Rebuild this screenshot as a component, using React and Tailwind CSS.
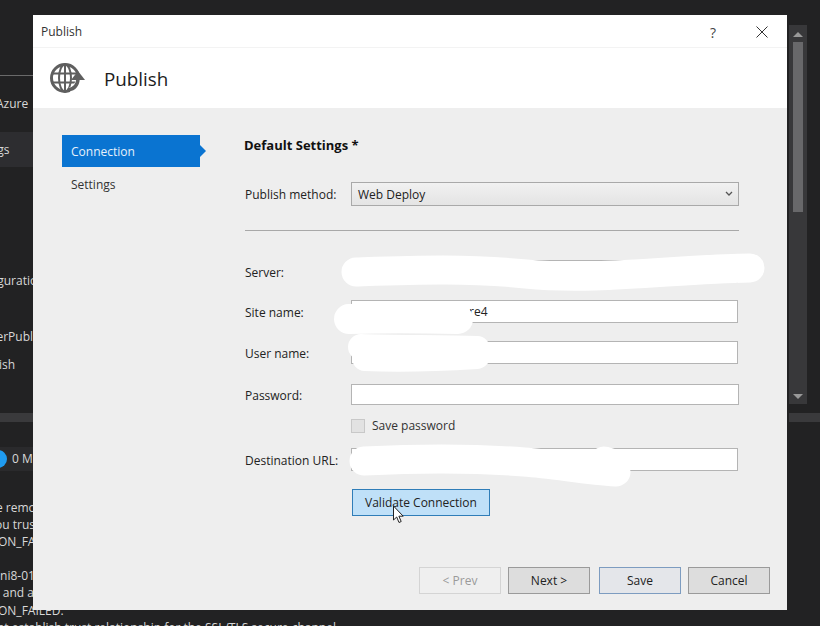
const font = { fontFamily: '"Open Sans", "Noto Sans", sans-serif' };

function GlobeIcon() {
  return (
    <svg width="36" height="32" viewBox="0 0 36 32" fill="none" className="block">
      <circle cx="16" cy="16" r="13.5" stroke="#5f5f5f" strokeWidth="3" />
      <ellipse cx="16" cy="16" rx="6" ry="13.5" stroke="#5f5f5f" strokeWidth="2" />
      <path d="M3 11.5h26M3 20.5h26M16 3v26" stroke="#5f5f5f" strokeWidth="2" />
      <path d="M21 29c6-2 9-6 9-12" stroke="#ffffff" strokeWidth="7" />
      <path d="M19 28c6-1 10-5 10-12" stroke="#5f5f5f" strokeWidth="3.5" />
      <path d="M22 18l7-9 7 9z" fill="#5f5f5f" />
    </svg>
  );
}

function Row({ label, className = '', children }) {
  return (
    <div className={`flex items-center ${className}`}>
      <div className="w-[106px] shrink-0 pl-px pt-[2px] text-[12px] text-[#222]">{label}</div>
      {children}
    </div>
  );
}

function Field({ value }) {
  return (
    <div className="ml-px h-[23px] w-[387px] border border-[#b4b4b4] bg-white pl-[117px] text-[12px] leading-[21px] text-[#222]">
      {value}
    </div>
  );
}

function FooterButton({ children, className = '' }) {
  return (
    <div className={`flex h-[27px] w-[82px] items-center justify-center border pt-px text-[12px] ${className}`}>
      {children}
    </div>
  );
}

function BackgroundIde() {
  return (
    <div className="flex h-full">
      <div className="w-[33px] shrink-0 overflow-hidden whitespace-nowrap text-[12px] text-[#d8d8d8]">
        <div className="h-[76px] border-b border-[#6a6a6a]" />
        <div className="mt-[18px] h-[20px] leading-[20px]"><span className="ml-[-4px]">Azure</span></div>
        <div className="mt-[18px] h-[35px] bg-[#2d2d30] leading-[35px]"><span className="ml-[-35px]">Settings</span></div>
        <div className="mt-[104px] h-[20px] leading-[20px]"><span className="ml-[-32px]">Configuration</span></div>
        <div className="mt-[36px] h-[20px] leading-[20px]"><span className="ml-[-18px]">UserPublish</span></div>
        <div className="mt-[8px] h-[20px] leading-[20px]"><span className="ml-[-26px]">Publish</span></div>
        <div className="mt-[38px] h-[9px] bg-[#3a3a3c]" />
        <div className="mt-[25px] flex h-[24px] items-center bg-[#2a2a2c]">
          <div className="ml-[-11px] h-[18px] w-[18px] shrink-0 rounded-full bg-[#1f9bf0]" />
          <span className="ml-[5px]">0 Messages</span>
        </div>
        <div className="mt-[28px] leading-[17px]">
          <div className="ml-[-9px]">re remote</div>
          <div className="ml-[-5px]">ou trust</div>
          <div className="ml-[-2px]">ON_FAILED</div>
          <div className="ml-[-3px] mt-[17px]">ini8-01</div>
          <div className="ml-[-6px]">s and a</div>
        </div>
      </div>
      <div className="flex-1" />
      <div className="mt-[25px] flex w-[31px] flex-col">
        <div className="flex h-[379px] w-[18px] flex-col items-center bg-[#38383a] pt-[7px]">
          <div className="h-0 w-0 border-x-[5px] border-b-[5px] border-x-transparent border-b-[#999]" />
          <div className="mt-[5px] h-[170px] w-[10px] bg-[#68686a]" />
          <div className="flex-1" />
          <div className="mb-[5px] h-0 w-0 border-x-[5px] border-t-[5px] border-x-transparent border-t-[#999]" />
        </div>
        <div className="mt-[9px] h-[9px] bg-[#3a3a3c]" />
      </div>
    </div>
  );
}

function Scribbles() {
  return (
    <svg className="absolute left-0 top-0" width="820" height="626" fill="none" stroke="#fff" strokeLinecap="round" strokeLinejoin="round">
      <path d="M356 272c60-2 110-4 170 2 70 7 150-5 224-6" strokeWidth="29" />
      <path d="M349 319c30-1 70-1 109 0" strokeWidth="30" />
      <path d="M361 347c30 1 80 1 116 2M365 358c40 2 80 0 112-2" strokeWidth="26" />
      <path d="M364 461c60-3 110-3 160 1 30 2 60 8 92 10M604 461l10 3" strokeWidth="29" />
    </svg>
  );
}

export default function App() {
  return (
    <div className="relative h-[626px] w-[820px] overflow-hidden bg-[#222223]" style={font}>
      <BackgroundIde />
      <div className="absolute bottom-[-10px] left-0 whitespace-nowrap text-[12px] leading-[17px] text-[#d8d8d8]">
        <div className="ml-[-2px]">ON_FAILED.</div>
        <div className="ml-[-3px]">nt establish trust relationship for the SSL/TLS secure channel</div>
      </div>

      {/* the dialog window */}
      <div className="absolute left-[33px] top-[15px] flex h-[595px] w-[754px] flex-col bg-[#eeeeee]">
        <div className="flex h-[33px] shrink-0 items-center border-b border-[#f3f3f3] bg-white pl-[8px] pt-[2px] text-[12px] text-[#333]">
          <span>Publish</span>
          <span className="ml-auto text-[14px] text-[#444]">?</span>
          <svg className="ml-[40px] mr-[19px]" width="12" height="12" viewBox="0 0 12 12" stroke="#333" strokeWidth="1" fill="none">
            <path d="M.5.5l11 11M11.5.5l-11 11" />
          </svg>
        </div>
        <div className="flex h-[60px] shrink-0 items-center bg-white pl-[16px]">
          <GlobeIcon />
          <span className="ml-[19px] pt-[2px] text-[18.8px] text-[#1c1c1c]">Publish</span>
        </div>

        <div className="flex min-h-0 flex-1">
          <div className="ml-[29px] mt-[27px] w-[138px] shrink-0 text-[12px]">
            <div className="relative flex h-[32px] items-center bg-[#0a74d1] pl-[9px] pt-[2px] text-[#e6f1fb]">
              Connection
              <div className="absolute left-full top-[10px] h-0 w-0 border-y-[6px] border-l-[6px] border-y-transparent border-l-[#0a74d1]" />
            </div>
            <div className="mt-[9px] pl-[9px] leading-[17px] text-[#333]">Settings</div>
          </div>

          <div className="ml-[44px] flex w-[495px] flex-col">
            <div className="mt-[28px] text-[13px] font-bold leading-[18px] text-[#111]">Default Settings *</div>
            <Row label="Publish method:" className="mt-[28px]">
              <div className="relative ml-px flex h-[24px] w-[388px] items-center border border-[#a9a9a9] bg-gradient-to-b from-[#f1f1f1] to-[#e4e4e4] pl-[6px] pt-px text-[12px] text-[#222]">
                Web Deploy
                <svg className="absolute right-[5px] top-[8px]" width="8" height="6" viewBox="0 0 8 6" fill="none" stroke="#555" strokeWidth="1.3">
                  <path d="M1 1l3 3 3-3" />
                </svg>
              </div>
            </Row>
            <div className="ml-px mt-[24px] h-px w-[494px] bg-[#a8a8a8]" />
            <Row label="Server:" className="mt-[29px]"><Field /></Row>
            <Row label="Site name:" className="mt-[17px]"><Field value="re4" /></Row>
            <Row label="User name:" className="mt-[18px]"><Field /></Row>
            <Row label="Password:" className="mt-[20px]">
              <div className="ml-px h-[21px] w-[388px] border border-[#b4b4b4] bg-white" />
            </Row>
            <div className="ml-[107px] mt-[12px] flex items-center">
              <div className="h-[14px] w-[14px] border border-[#c8c8c8] bg-[#e2e2e2]" />
              <span className="ml-[7px] text-[12px] text-[#333]">Save password</span>
            </div>
            <Row label="Destination URL:" className="mt-[13px]"><Field /></Row>
            <div className="ml-[108px] mt-[18px] flex h-[27px] w-[138px] items-center justify-center border border-[#2f7db8] bg-[#bfe0f8] text-[12px] text-[#222]">
              Validate Connection
            </div>
          </div>
        </div>

        <div className="mb-[16px] mr-[17px] flex shrink-0 justify-end gap-[7px]">
          <FooterButton className="border-[#d4d4d4] bg-[#efefef] text-[#9a9a9a]">&lt; Prev</FooterButton>
          <FooterButton className="border-[#9a9a9a] bg-[#dddddd] text-[#222]">Next &gt;</FooterButton>
          <FooterButton className="ml-[2px] border-[#7d9cc0] bg-[#e4e6ea] text-[#222]">Save</FooterButton>
          <FooterButton className="border-[#9a9a9a] bg-[#dddddd] text-[#222]">Cancel</FooterButton>
        </div>
      </div>

      <Scribbles />

      {/* mouse pointer over the validate button */}
      <svg className="absolute left-[392px] top-[505px]" width="12" height="19" viewBox="0 0 12 19">
        <path d="M1.5 1v14l3.2-3 2.3 5.5 2.2-1-2.3-5.3h4.3z" fill="#fff" stroke="#222" strokeWidth="1" />
      </svg>
    </div>
  );
}
